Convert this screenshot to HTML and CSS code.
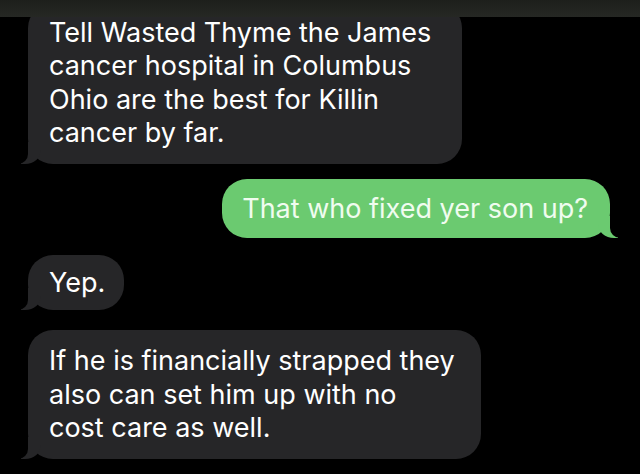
FILE: index.html
```html
<!DOCTYPE html>
<html lang="en">
  <head>
    <meta charset="UTF-8" />
    <meta name="viewport" content="width=device-width, initial-scale=1.0" />
    <title>Messages</title>
    <link rel="stylesheet" href="styles.css">
  </head>
  <body>
    <div class="screen">
      <div class="top--bar"></div>
      <div class="thread">
        <div class="msg msg--in msg--first">
          Tell Wasted Thyme the James<br />
          cancer hospital in Columbus<br />
          Ohio are the best for Killin<br />
          cancer by far.
        </div>
        <div class="msg msg--out">That who fixed yer son up?</div>
        <div class="msg msg--in msg--yep">Yep.</div>
        <div class="msg msg--in msg--last">
          If he is financially strapped they<br />
          also can set him up with no<br />
          cost care as well.
        </div>
      </div>
    </div>
  </body>
</html>
```

FILE: styles.css
```css
* {
  box-sizing: border-box;
  padding: 0;
  margin: 0;
}
body {
  background-color: #000;
  font-family: Inter, "Noto Sans", sans-serif;
  -webkit-font-smoothing: antialiased;
}
.screen {
  width: 640px;
  height: 474px;
  overflow: hidden;
  background-color: #000;
}
.top--bar {
  position: relative;
  z-index: 2;
  height: 17px;
  background: linear-gradient(#1d1f1b, #262824);
}
.thread {
  display: flex;
  flex-direction: column;
  padding: 0 30px 0 28px;
}
.msg {
  position: relative;
  max-width: 480px;
  padding: 13px 26px 13px 21px;
  font-size: 27px;
  line-height: 33.4px;
  border-radius: 25px;
}
.msg--in {
  align-self: flex-start;
  background-color: #262628;
  color: #fff;
}
.msg--out {
  align-self: flex-end;
  background-color: #6bca70;
  color: #f0fcef;
  padding: 13px 22px 13px 20px;
  margin-top: 15px;
}
.msg--first {
  margin-top: -14px;
  padding-right: 31px;
  padding-bottom: 14px;
}
.msg--yep {
  margin-top: 17px;
  padding: 11px 19px 11px 21px;
}
.msg--last {
  margin-top: 20px;
  padding-top: 14px;
  padding-bottom: 14px;
}

/* tails */
.msg::before,
.msg::after {
  content: "";
  position: absolute;
  bottom: 0;
  height: 22px;
}
.msg--in::before {
  left: -7px;
  width: 20px;
  background-color: #262628;
  border-bottom-right-radius: 16px 14px;
}
.msg--in::after {
  left: -26px;
  width: 26px;
  background-color: #000;
  border-bottom-right-radius: 10px;
}
.msg--out::before {
  right: -8px;
  width: 20px;
  background-color: #6bca70;
  border-bottom-left-radius: 16px 14px;
}
.msg--out::after {
  right: -26px;
  width: 26px;
  background-color: #000;
  border-bottom-left-radius: 10px;
}
```
